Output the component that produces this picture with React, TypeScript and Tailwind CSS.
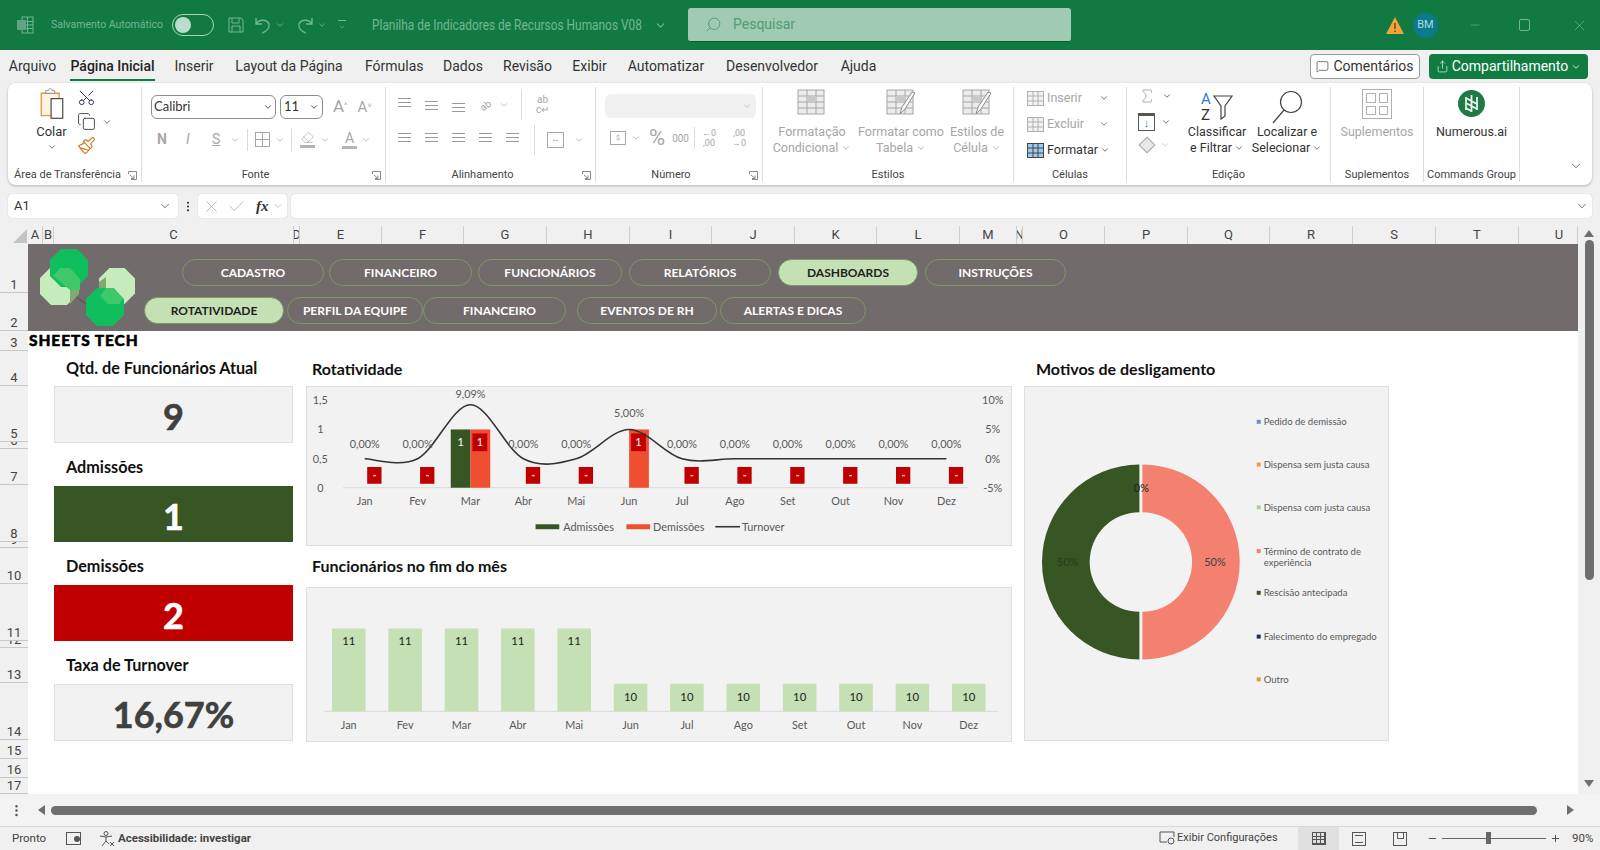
import { ChevronDown, Check, X, Minus, Plus, Search, MessageSquare, Scissors, Copy, Paintbrush, Sigma, MoreVertical, Share, Eraser } from 'lucide-react';
import type { ReactNode } from 'react';

const MONTHS = ['Jan', 'Fev', 'Mar', 'Abr', 'Mai', 'Jun', 'Jul', 'Ago', 'Set', 'Out', 'Nov', 'Dez'];

const TABS = [
  ['Arquivo', 'w-[49px] ml-[8px]'],
  ['Página Inicial', 'w-[85px] ml-[13px]'],
  ['Inserir', 'w-[40px] ml-[19px]'],
  ['Layout da Página', 'w-[110px] ml-[20px]'],
  ['Fórmulas', 'w-[57px] ml-[21px]'],
  ['Dados', 'w-[40px] ml-[21px]'],
  ['Revisão', 'w-[48px] ml-[20px]'],
  ['Exibir', 'w-[35px] ml-[21px]'],
  ['Automatizar', 'w-[78px] ml-[20px]'],
  ['Desenvolvedor', 'w-[94px] ml-[20px]'],
  ['Ajuda', 'w-[37px] ml-[21px]'],
];

const COLS = [
  ['A', 'w-[15px]'], ['B', 'w-[11px]'], ['C', 'w-[240px]'], ['D', 'w-[6px]'], ['E', 'w-[82px]'], ['F', 'w-[82px]'],
  ['G', 'w-[83px]'], ['H', 'w-[83px]'], ['I', 'w-[82px]'], ['J', 'w-[83px]'], ['K', 'w-[82px]'], ['L', 'w-[83px]'],
  ['M', 'w-[57px]'], ['N', 'w-[6px]'], ['O', 'w-[82px]'], ['P', 'w-[83px]'], ['Q', 'w-[82px]'], ['R', 'w-[83px]'],
  ['S', 'w-[83px]'], ['T', 'w-[83px]'], ['U', 'w-[59px] pl-[22px]'],
];

const ROWS = [
  ['1', 'h-[49px]'], ['2', 'h-[38px]'], ['3', 'h-[20px]'], ['4', 'h-[35px]'], ['5', 'h-[56px]'], ['6', 'h-[7px]'],
  ['7', 'h-[36px]'], ['8', 'h-[57px]'], ['9', 'h-[6px]'], ['10', 'h-[36px]'], ['11', 'h-[57px]'], ['12', 'h-[7px]'],
  ['13', 'h-[35px]'], ['14', 'h-[57px]'], ['15', 'h-[19px]'], ['16', 'h-[19px]'], ['17', 'h-[16px]'],
];

const MENU_TOP = [
  ['CADASTRO', 'w-[142px] ml-[154px]', false],
  ['FINANCEIRO', 'w-[143px] ml-[5px]', false],
  ['FUNCIONÁRIOS', 'w-[144px] ml-[6px]', false],
  ['RELATÓRIOS', 'w-[142px] ml-[7px]', false],
  ['DASHBOARDS', 'w-[140px] ml-[7px]', true],
  ['INSTRUÇÕES', 'w-[141px] ml-[7px]', false],
] as const;

const MENU_BOTTOM = [
  ['ROTATIVIDADE', 'w-[140px] ml-[116px]', true],
  ['PERFIL DA EQUIPE', 'w-[136px] ml-[3px]', false],
  ['FINANCEIRO', 'w-[143px] pl-[10px]', false],
  ['EVENTOS DE RH', 'w-[140px] ml-[11px]', false],
  ['ALERTAS E DICAS', 'w-[146px] ml-[3px]', false],
] as const;

const LEGEND = [
  ['Pedido de demissão', 421, '#6a8cbb'],
  ['Dispensa sem justa causa', 464, '#ed9d3a'],
  ['Dispensa com justa causa', 507, '#a9d18e'],
  ['Término de contrato de', 551, '#f4806f'],
  ['Rescisão antecipada', 593, '#375623'],
  ['Falecimento do empregado', 637, '#1f2b5c'],
  ['Outro', 680, '#e0a030'],
] as const;

/** Excel's "smooth line": cubic segments with tangents from the neighbouring points. */
function smoothPath(pts: [number, number][]): string {
  let d = `M${pts[0][0]} ${pts[0][1]}`;
  for (let i = 0; i < pts.length - 1; i++) {
    const p0 = pts[Math.max(i - 1, 0)];
    const p1 = pts[i];
    const p2 = pts[i + 1];
    const p3 = pts[Math.min(i + 2, pts.length - 1)];
    d += ` C${p1[0] + (p2[0] - p0[0]) / 6} ${p1[1] + (p2[1] - p0[1]) / 6} ${p2[0] - (p3[0] - p1[0]) / 6} ${p2[1] - (p3[1] - p1[1]) / 6} ${p2[0]} ${p2[1]}`;
  }
  return d;
}

function Chev({ className = 'text-[#555]' }: { className?: string }) {
  return <ChevronDown size={10} strokeWidth={2} className={className} />;
}

function Octagon({ cx, cy, r, fill }: { cx: number; cy: number; r: number; fill: string }) {
  const k = r * 0.42;
  return (
    <polygon
      points={`${cx - k},${cy - r} ${cx + k},${cy - r} ${cx + r},${cy - k} ${cx + r},${cy + k} ${cx + k},${cy + r} ${cx - k},${cy + r} ${cx - r},${cy + k} ${cx - r},${cy - k}`}
      fill={fill}
    />
  );
}

function Logo() {
  return (
    <svg width="110" height="86" viewBox="28 246 110 86" className="absolute top-[2px] left-0">
      <path d="M74 295 L90 307 L100 307" stroke="#5c5757" strokeWidth="1.5" fill="none" />
      <Octagon cx={59} cy={286} r={19} fill="#c6ecbb" />
      <Octagon cx={117} cy={286} r={18} fill="#c6ecbb" />
      <polygon points="70,275 79,284 79,294 70,304" fill="#84a873" />
      <polygon points="99,282 106,277 106,296 99,296" fill="#84a873" />
      <Octagon cx={69} cy={268} r={19} fill="#0fbe5c" />
      <Octagon cx={105} cy={307} r={19} fill="#0fbe5c" />
      <polygon points="53,276 60,268 70,268 80,279 80,290 70,290" fill="#3fc86a" />
      <polygon points="100,296 106,288 114,288 123,299 119,304 108,304" fill="#3fc86a" />
    </svg>
  );
}

function Pill({ label, width, active }: { label: string; width: string; active: boolean }) {
  return (
    <div
      className={`flex h-full items-center justify-center rounded-full border-[1.5px] border-[#7c9a62] text-[12px] font-bold font-['Lato',sans-serif] ${width} ${active ? 'bg-[#c5e0b4] text-[#1f1f1f]' : 'text-white'}`}
    >
      {label}
    </div>
  );
}

function Kpi({ title, value, tone, first, tall }: { title: string; value: string; tone: string; first?: boolean; tall?: boolean }) {
  return (
    <>
      <div className={`flex items-center pl-[12px] text-[16.2px] font-bold text-[#111] ${first ? 'h-[35px]' : 'h-[43px] pt-[5px]'}`}>{title}</div>
      <div className={`flex items-center justify-center pt-[3px] text-[36px] font-bold [-webkit-text-stroke:0.6px_currentColor] ${tall ? 'h-[57px]' : 'h-[56px]'} ${tone}`}>{value}</div>
    </>
  );
}

function RotationChart() {
  const cats = MONTHS.map((_, i) => 361 + i * 53.55);
  const line = smoothPath(cats.map((x, i) => [x, i === 2 ? 404 : i === 5 ? 429 : 458.7]));
  return (
    <svg viewBox="306 386 706 160" className="h-full w-full font-['Lato',sans-serif]">
      <line x1="339" y1="488" x2="972" y2="488" stroke="#d9d9d9" />
      {[['1,5', 399], ['1', 429], ['0,5', 459], ['0', 488]].map(([t, y]) => (
        <text key={t} x="316" y={Number(y) + 4} textAnchor="middle" fontSize="11" fill="#595959">{t}</text>
      ))}
      {[['10%', 399], ['5%', 429], ['0%', 459], ['-5%', 488]].map(([t, y]) => (
        <text key={t} x="997" y={Number(y) + 4} textAnchor="middle" fontSize="11" fill="#595959">{t}</text>
      ))}
      <rect x={cats[2] - 20} y="429" width="20" height="59" fill="#375623" />
      <rect x={cats[2]} y="429" width="20" height="59" fill="#f04e30" />
      <rect x={cats[5]} y="429" width="20" height="59" fill="#f04e30" />
      <text x={cats[2] - 10} y="446" textAnchor="middle" fontSize="11" fill="#fff">1</text>
      {cats.map((x, i) =>
        i === 2 || i === 5 ? (
          <g key={i}>
            <rect x={x + 2} y="433" width="15" height="18" fill="#c00000" />
            <text x={x + 9.5} y="446" textAnchor="middle" fontSize="11" fill="#fff">1</text>
          </g>
        ) : (
          <g key={i}>
            <rect x={x + 2.5} y="467" width="14.5" height="17" fill="#c00000" />
            <rect x={x + 8.5} y="475" width="3" height="1.5" fill="#f4b6a8" />
          </g>
        ),
      )}
      <path d={line} fill="none" stroke="#333" strokeWidth="1.6" />
      {cats.map((x, i) => (
        <text key={i} x={x} y={i === 2 ? 397 : i === 5 ? 416 : 448} textAnchor="middle" fontSize="11" fill="#595959">
          {i === 2 ? '9,09%' : i === 5 ? '5,00%' : '0,00%'}
        </text>
      ))}
      {cats.map((x, i) => (
        <text key={i} x={x} y="506" textAnchor="middle" fontSize="11" fill="#595959">{MONTHS[i]}</text>
      ))}
      <rect x="534" y="525" width="24" height="5" fill="#375623" />
      <text x="562" y="532" fontSize="11" fill="#595959">Admissões</text>
      <rect x="626" y="525" width="24" height="5" fill="#f04e30" />
      <text x="653" y="532" fontSize="11" fill="#595959">Demissões</text>
      <line x1="716" y1="527.5" x2="741" y2="527.5" stroke="#333" strokeWidth="1.6" />
      <text x="743" y="532" fontSize="11" fill="#595959">Turnover</text>
    </svg>
  );
}

function StaffChart() {
  return (
    <svg viewBox="306 587 706 155" className="h-full w-full font-['Lato',sans-serif]">
      <line x1="320" y1="712" x2="1003" y2="712" stroke="#d9d9d9" />
      {MONTHS.map((m, i) => {
        const x = 344.7 + i * 57.1;
        const big = i < 5;
        return (
          <g key={m}>
            <rect x={x - 17} y={big ? 628 : 684} width="34" height={big ? 84 : 28} fill="#c5e0b4" />
            <text x={x} y={big ? 645 : 701} textAnchor="middle" fontSize="11.5" fill="#222">{big ? '11' : '10'}</text>
            <text x={x} y="730" textAnchor="middle" fontSize="11" fill="#595959">{m}</text>
          </g>
        );
      })}
    </svg>
  );
}

function DonutChart() {
  return (
    <svg viewBox="1024 386 365 355" className="h-full w-full font-['Lato',sans-serif]">
      <path d="M1139 464 A98 98 0 0 0 1139 660 L1139 612 A50 50 0 0 1 1139 512 Z" fill="#375623" />
      <path d="M1142 464 A98 98 0 0 1 1142 660 L1142 612 A50 50 0 0 0 1142 512 Z" fill="#f4806f" />
      <text x="1067" y="566" textAnchor="middle" fontSize="11" fill="#2a3a1c">50%</text>
      <text x="1215" y="566" textAnchor="middle" fontSize="11" fill="#404040">50%</text>
      <text x="1141" y="492" textAnchor="middle" fontSize="11" fill="#222">0%</text>
      {LEGEND.map(([label, y, color]) => (
        <g key={label}>
          <rect x="1257" y={y - 2} width="4" height="4" fill={color} />
          <text x="1264" y={y + 3.5} fontSize="9.6" fill="#595959">{label}</text>
        </g>
      ))}
      <text x="1264" y="566.5" fontSize="9.6" fill="#595959">experiência</text>
    </svg>
  );
}

function RibbonGroup({ label, width, children, launcher, labelClass = '', last }: { label: string; width: string; children: ReactNode; launcher?: boolean; labelClass?: string; last?: boolean }) {
  return (
    <div className={`flex h-[95px] flex-col ${width} ${last ? '' : 'border-r border-[#dcdcdc]'}`}>
      <div className="h-[81px] min-h-0">{children}</div>
      <div className={`relative flex h-[14px] items-center justify-center text-[11px] whitespace-nowrap text-[#444] ${labelClass}`}>
        {label}
        {launcher && (
          <svg width="9" height="9" viewBox="0 0 9 9" className="absolute right-[4px] top-[3px]" fill="none" stroke="#8a8a8a">
            <path d="M.5 3V.5H8.500V8.500H3M2 4L6 7.500M6 4.500V7.500H3" />
          </svg>
        )}
      </div>
    </div>
  );
}

function StyleButton({ top, bottom, width, children }: { top: string; bottom: string; width: string; children: ReactNode }) {
  return (
    <div className={`flex flex-col items-center text-[12.5px] leading-[16px] text-[#a6a6a6] ${width}`}>
      <div className="flex h-[37px] items-start">{children}</div>
      <span className="whitespace-nowrap">{top}</span>
      <span className="flex items-center gap-[3px] whitespace-nowrap">{bottom}<Chev className="text-[#a6a6a6]" /></span>
    </div>
  );
}

function TableGlyph({ brush }: { brush?: boolean }) {
  return (
    <svg width="32" height="30" viewBox="0 0 32 30" fill="none">
      <rect x="2" y="3" width="26" height="24" fill="#ececec" stroke="#a6a6a6" />
      <path d="M2 9H28M2 15H28M2 21H28M11 3V27M20 3V27" stroke="#a6a6a6" />
      <rect x="11" y="9" width="9" height="6" fill="#c9c9c9" />
      {brush && <path d="M30 6L20 22L15 27L17 20L27 5Z" fill="#f7f7f7" stroke="#8e8e8e" />}
    </svg>
  );
}

function CellGlyph({ stroke, fill }: { stroke: string; fill: string }) {
  return (
    <svg width="17" height="15" viewBox="0 0 17 15" fill={fill} stroke={stroke} className="mr-[3px]">
      <rect x=".5" y=".5" width="16" height="14" />
      <path d="M.5 5H16.500M.5 10H16.500M6 .5V14.500M11 .5V14.500" fill="none" />
    </svg>
  );
}

function AlignLines({ pos }: { pos: string }) {
  return (
    <span className={`flex h-[14px] w-[27px] flex-col items-center gap-[3px] ${pos}`}>
      <span className="h-px w-[13px] bg-[#999]" />
      <span className="h-px w-[13px] bg-[#999]" />
      <span className="h-px w-[13px] bg-[#999]" />
    </span>
  );
}

function Ribbon() {
  return (
    <div className="mx-[8px] flex h-[102px] items-center rounded-lg bg-white pt-[1px] shadow-[0_1px_3px_rgba(0,0,0,0.25)]">
      <RibbonGroup label="Área de Transferência" width="w-[134px]" launcher labelClass="pr-[14px]">
        <div className="flex h-full">
          <div className="flex w-[69px] flex-col items-center pl-[18px] text-[13px] text-[#333]">
            <svg width="30" height="34" viewBox="0 0 30 38" fill="none">
              <path d="M3 7H23V32H3Z" fill="#fdf3e3" stroke="#e39a3b" strokeWidth="1.5" />
              <path d="M8 7V4H11C11 1 15 1 15 4H18V7Z" fill="#fff" stroke="#8a8a8a" />
              <rect x="14" y="13" width="13" height="22" fill="#fff" stroke="#444" strokeWidth="1.3" />
            </svg>
            <span className="mt-[1px]">Colar</span>
            <Chev />
          </div>
          <div className="flex flex-col gap-[5px] pt-[1px]">
            <Scissors size={19} strokeWidth={1.2} className="rotate-[-90deg] text-[#335]" />
            <span className="flex items-center gap-[6px]"><Copy size={19} strokeWidth={1.2} className="text-[#444]" /><Chev /></span>
            <Paintbrush size={19} strokeWidth={1.4} className="text-[#c77a25]" />
          </div>
        </div>
      </RibbonGroup>

      <RibbonGroup label="Fonte" width="w-[244px]" launcher labelClass="pr-[16px]">
        <div className="flex h-full flex-col gap-[8px] pt-[7px] pl-[9px]">
          <div className="flex items-center gap-[4px]">
            <div className="flex h-[24px] w-[125px] items-center justify-between rounded-md border border-[#8d8d8d] px-[2px] font-['Lato',sans-serif] text-[13px] text-[#333]">Calibri<Chev className="text-[#333]" /></div>
            <div className="flex h-[24px] w-[43px] items-center justify-between rounded-md border border-[#8d8d8d] px-[3px] font-['Lato',sans-serif] text-[13px] text-[#333]">11<Chev className="text-[#333]" /></div>
            <span className="ml-[6px] text-[17px] text-[#a6a6a6]">A<sup className="text-[8px]">^</sup></span>
            <span className="ml-[6px] text-[15px] text-[#a6a6a6]">A<sup className="text-[8px]">˅</sup></span>
          </div>
          <div className="flex h-[24px] items-center text-[14px] text-[#a6a6a6]">
            <span className="ml-[6px] w-[29px] font-bold">N</span>
            <span className="w-[26px] italic">I</span>
            <span className="w-[18px] underline">S</span>
            <Chev className="text-[#b0b0b0]" />
            <span className="mx-[7px] h-[22px] w-px bg-[#dcdcdc]" />
            <span className="grid h-[15px] w-[15px] grid-cols-2 border border-[#a6a6a6]"><span className="border-r border-b border-[#a6a6a6]" /><span className="border-b border-[#a6a6a6]" /><span className="border-r border-[#a6a6a6]" /><span /></span>
            <Chev className="ml-[5px] text-[#b0b0b0]" />
            <span className="mx-[6px] h-[22px] w-px bg-[#dcdcdc]" />
            <span className="flex w-[18px] flex-col items-center leading-none"><Eraser size={13} strokeWidth={1.3} /><span className="mt-[1px] h-[3px] w-[15px] bg-[#b5b5b5]" /></span>
            <Chev className="ml-[4px] text-[#b0b0b0]" />
            <span className="ml-[12px] flex w-[15px] flex-col items-center leading-none">A<span className="mt-[1px] h-[3px] w-[15px] bg-[#b5b5b5]" /></span>
            <Chev className="ml-[4px] text-[#b0b0b0]" />
          </div>
        </div>
      </RibbonGroup>

      <RibbonGroup label="Alinhamento" width="w-[210px]" launcher labelClass="pr-[16px]">
        <div className="flex h-full flex-col gap-[19px] pt-[10px] pl-[5px]">
          <div className="flex h-[16px] items-center">
            <AlignLines pos="justify-start" />
            <AlignLines pos="justify-center" />
            <AlignLines pos="justify-end" />
            <span className="flex w-[27px] justify-center text-[10px] text-[#a6a6a6] rotate-[-35deg]">ab</span>
            <Chev className="text-[#b0b0b0]" />
            <span className="ml-[12px] h-[30px] w-px bg-[#dcdcdc]" />
            <span className="ml-[14px] text-center text-[10px] leading-[10px] text-[#a6a6a6]">ab<br />c↵</span>
          </div>
          <div className="flex h-[16px] items-center">
            <AlignLines pos="" />
            <AlignLines pos="" />
            <AlignLines pos="" />
            <AlignLines pos="" />
            <AlignLines pos="" />
            <span className="ml-[8px] h-[30px] w-px bg-[#dcdcdc]" />
            <span className="ml-[12px] flex h-[16px] w-[17px] items-center justify-center border border-[#a6a6a6] text-[9px] text-[#a6a6a6]">↔</span>
            <Chev className="ml-[10px] text-[#b0b0b0]" />
          </div>
        </div>
      </RibbonGroup>

      <RibbonGroup label="Número" width="w-[167px]" launcher labelClass="pr-[16px]">
        <div className="flex h-full flex-col gap-[8px] pt-[7px] pl-[9px]">
          <div className="flex h-[24px] w-[151px] items-center justify-end rounded-md bg-[#f0f0f0] pr-[4px]"><Chev className="text-[#c0c0c0]" /></div>
          <div className="flex h-[24px] items-center text-[#a6a6a6]">
            <span className="ml-[5px] flex h-[14px] w-[16px] items-center justify-center border border-[#a6a6a6] text-[7px]">$</span>
            <Chev className="ml-[5px]" />
            <span className="ml-[8px] text-[22px] leading-none">%</span>
            <span className="ml-[7px] text-[10px]">000</span>
            <span className="ml-[5px] h-[22px] w-px bg-[#dcdcdc]" />
            <span className="ml-[7px] text-center text-[9px] leading-[10px]">←0<br />,00</span>
            <span className="ml-[16px] text-center text-[9px] leading-[10px]">,00<br />→0</span>
          </div>
        </div>
      </RibbonGroup>

      <RibbonGroup label="Estilos" width="w-[251px]">
        <div className="flex h-full">
          <StyleButton top="Formatação" bottom="Condicional" width="ml-[8px] w-[82px]"><TableGlyph /></StyleButton>
          <StyleButton top="Formatar como" bottom="Tabela" width="ml-[7px] w-[82px]"><TableGlyph brush /></StyleButton>
          <StyleButton top="Estilos de" bottom="Célula" width="w-[70px]"><TableGlyph brush /></StyleButton>
        </div>
      </RibbonGroup>

      <RibbonGroup label="Células" width="w-[113px]">
        <div className="mt-[-2px] flex h-full flex-col pl-[13px] text-[12.5px] leading-[26px]">
          <span className="flex items-center text-[#a6a6a6]"><CellGlyph stroke="#b0b0b0" fill="#f2f2f2" /><span className="w-[52px]">Inserir</span><Chev /></span>
          <span className="flex items-center text-[#a6a6a6]"><CellGlyph stroke="#b0b0b0" fill="#f2f2f2" /><span className="w-[52px]">Excluir</span><Chev /></span>
          <span className="flex items-center text-[#333]"><CellGlyph stroke="#444" fill="#9ccbee" />Formatar<Chev className="ml-[2px] text-[#555]" /></span>
        </div>
      </RibbonGroup>

      <RibbonGroup label="Edição" width="w-[204px]">
        <div className="flex h-full">
          <div className="flex w-[53px] flex-col gap-[8px] pl-[11px] text-[#a6a6a6]">
            <span className="flex items-center gap-[6px]"><Sigma size={18} strokeWidth={1.2} /><Chev /></span>
            <span className="flex items-center gap-[6px]"><span className="flex h-[18px] w-[17px] items-center justify-center border border-[#555] border-t-[3px] text-[11px] leading-none text-[#2b7cd3]">↓</span><Chev /></span>
            <span className="flex items-center gap-[7px]"><span className="ml-[3px] h-[12px] w-[12px] rotate-45 border border-[#a6a6a6] bg-[#e8e8e8]" /><Chev className="text-[#c0c0c0]" /></span>
          </div>
          <div className="flex w-[74px] flex-col items-center text-[12.5px] leading-[16px] text-[#333]">
            <svg width="36" height="36" viewBox="0 0 36 36" fill="none" className="mt-[2px]">
              <text x="2" y="15" fontSize="15" fill="#2b7cd3">A</text>
              <text x="2" y="31" fontSize="15" fill="#333">Z</text>
              <path d="M15 7H33L26 17V27L22 30V17Z" stroke="#444" strokeWidth="1.2" />
            </svg>
            <span className="mt-[-1px] whitespace-nowrap">Classificar</span>
            <span className="flex items-center gap-[2px] whitespace-nowrap">e Filtrar<Chev /></span>
          </div>
          <div className="flex w-[66px] flex-col items-center text-[12.5px] leading-[16px] text-[#333]">
            <svg width="36" height="36" viewBox="0 0 36 36" fill="none" className="mt-[2px]">
              <circle cx="22" cy="13" r="10.500" stroke="#444" strokeWidth="1.2" />
              <path d="M15 21L4 34" stroke="#444" strokeWidth="1.2" />
            </svg>
            <span className="mt-[-1px] whitespace-nowrap">Localizar e</span>
            <span className="flex items-center gap-[2px] whitespace-nowrap">Selecionar<Chev /></span>
          </div>
        </div>
      </RibbonGroup>

      <RibbonGroup label="Suplementos" width="w-[93px]">
        <div className="flex flex-col items-center pt-[2px] text-[12.5px] text-[#a6a6a6]">
          <span className="grid h-[30px] w-[30px] grid-cols-2 gap-[3px] border border-[#b0b0b0] p-[3px]"><span className="border border-[#b0b0b0]" /><span className="border border-[#b0b0b0]" /><span className="border border-[#b0b0b0]" /><span className="border border-[#b0b0b0]" /></span>
          <span className="mt-[4px]">Suplementos</span>
        </div>
      </RibbonGroup>

      <RibbonGroup label="Commands Group" width="w-[96px]">
        <div className="flex flex-col items-center pt-[3px] text-[12.5px] text-[#333]">
          <svg width="27" height="27" viewBox="0 0 27 27">
            <circle cx="13.500" cy="13.500" r="13.500" fill="#1f7a45" />
            <path d="M8 7V20M13.500 5V22M19 7V20M8 8L19 14M8 13L19 19M8 18L13 21" stroke="#e8f2ec" strokeWidth="1.800" />
          </svg>
          <span className="mt-[6px]">Numerous.ai</span>
        </div>
      </RibbonGroup>

      <div className="flex h-[95px] flex-1 items-end justify-end pr-[9px] pb-[9px]"><ChevronDown size={14} strokeWidth={1.4} className="text-[#444]" /></div>
    </div>
  );
}

function TitleBar() {
  return (
    <div className="flex h-[50px] items-center bg-[#117a43] text-[#74b694]">
      <svg width="18" height="18" viewBox="0 0 18 18" fill="none" stroke="currentColor" className="ml-[16px]">
        <rect x="6" y="1" width="11" height="16" />
        <path d="M6 5.500H17M6 9H17M6 12.500H17M11.500 1V17" />
        <rect x="1" y="4" width="9" height="10" fill="#5fa583" stroke="none" />
      </svg>
      <span className="ml-[17px] w-[114px] text-[10.5px] whitespace-nowrap">Salvamento Automático</span>
      <span className="ml-[7px] flex h-[22px] w-[42px] items-center rounded-full border border-[#a8d4bc] px-[2px]"><span className="h-[16px] w-[16px] rounded-full bg-[#b9ddc9]" /></span>
      <svg width="18" height="18" viewBox="0 0 18 18" fill="none" stroke="currentColor" className="ml-[13px]">
        <path d="M2 2H14L16 4V16H2Z M5 2V7H12V2 M5 16V10H13V16" />
      </svg>
      <svg width="18" height="18" viewBox="0 0 18 18" fill="none" stroke="currentColor" strokeWidth="1.3" className="ml-[9px]">
        <path d="M2 2V8H8M2 8C5 3 13 3 15 8C16 12 12 16 8 17" />
      </svg>
      <Chev className="ml-[3px] text-[#74b694]" />
      <svg width="18" height="18" viewBox="0 0 18 18" fill="none" stroke="currentColor" strokeWidth="1.3" className="ml-[11px]">
        <path d="M16 2V8H10M16 8C13 3 5 3 3 8C2 12 6 16 10 17" />
      </svg>
      <Chev className="ml-[3px] text-[#74b694]" />
      <span className="ml-[11px] flex flex-col items-center gap-[2px]"><span className="h-px w-[8px] bg-current" /><ChevronDown size={8} /></span>
      <span className="ml-[26px] w-[280px] origin-left scale-x-[0.85] text-[14px] whitespace-nowrap">Planilha de Indicadores de Recursos Humanos V08</span>
      <ChevronDown size={13} className="ml-[2px]" />
      <div className="ml-[21px] flex h-[34px] w-[383px] items-center rounded-[3px] border-b border-[#0c5c32] bg-[#a0cab1] pl-[17px] text-[14px] text-[#4f9d72]">
        <Search size={17} strokeWidth={1.3} className="mr-[11px] -scale-x-100" />Pesquisar
      </div>
      <svg width="18" height="17" viewBox="0 0 18 17" className="ml-[315px]">
        <path d="M9 0L18 17H0Z" fill="#f2a33a" />
        <path d="M9 6V12M9 13.500V15" stroke="#5b3a10" strokeWidth="1.300" />
      </svg>
      <span className="ml-[9px] flex h-[25px] w-[25px] items-center justify-center rounded-full bg-[#0b7a8c] text-[11px] text-[#a8dbe0]">BM</span>
      <Minus size={14} strokeWidth={1} className="ml-[30px]" />
      <span className="relative ml-[37px] h-[12px] w-[11px] rounded-[2px] border border-current" />
      <X size={17} strokeWidth={1} className="ml-[41px]" />
    </div>
  );
}

function Tabs() {
  return (
    <div className="flex h-[33px] items-center text-[14px] text-[#333]">
      {TABS.map(([name, cls]) => (
        <div key={name} className={`relative text-center whitespace-nowrap ${cls} ${name === 'Página Inicial' ? 'font-medium text-[#222]' : ''}`}>
          {name}
          {name === 'Página Inicial' && <span className="absolute right-0 bottom-[-4px] left-0 h-[2px] bg-[#107c41]" />}
        </div>
      ))}
      <div className="ml-auto flex items-center gap-[9px] pr-[12px]">
        <div className="flex h-[25px] w-[110px] items-center justify-center gap-[4px] rounded-[4px] border border-[#9a9a9a] bg-white"><MessageSquare size={13} strokeWidth={1.2} />Comentários</div>
        <div className="flex h-[25px] w-[159px] items-center justify-center gap-[3px] rounded-[4px] bg-[#107c41] text-white"><Share size={13} strokeWidth={1.2} />Compartilhamento<Chev className="text-white" /></div>
      </div>
    </div>
  );
}

function FormulaBar() {
  return (
    <div className="mt-[9px] flex h-[24px] items-center px-[8px] text-[13px] text-[#333]">
      <div className="flex h-full w-[170px] items-center justify-between rounded-[4px] bg-white pr-[6px] pl-[6px] shadow-[0_0_1px_rgba(0,0,0,0.3)]">A1<ChevronDown size={14} strokeWidth={1.2} /></div>
      <MoreVertical size={13} className="ml-[3px] w-[14px]" />
      <div className="ml-[3px] flex h-full w-[89px] items-center rounded-[4px] bg-white pl-[4px] text-[#a6a6a6] shadow-[0_0_1px_rgba(0,0,0,0.3)]">
        <X size={19} strokeWidth={1} />
        <Check size={19} strokeWidth={1} className="ml-[6px]" />
        <span className="ml-[10px] font-['Liberation_Serif',serif] text-[15px] font-bold text-[#333] italic">fx</span>
        <ChevronDown size={12} strokeWidth={1.2} className="ml-[3px]" />
      </div>
      <div className="ml-[4px] flex h-full flex-1 items-center justify-end rounded-[4px] bg-white pr-[3px] shadow-[0_0_1px_rgba(0,0,0,0.3)]"><ChevronDown size={14} strokeWidth={1.2} /></div>
    </div>
  );
}

function ColumnHeader() {
  return (
    <div className="mt-[8px] flex h-[18px] text-[13px] text-[#444]">
      <div className="flex w-[28px] items-end justify-end pr-[1px] pb-[1px]">
        <svg width="14" height="14" viewBox="0 0 14 14"><path d="M14 0V14H0Z" fill="#c4c4c4" /></svg>
      </div>
      {COLS.map(([c, w]) => (
        <div key={c} className={`flex items-center justify-center overflow-hidden border-r border-[#cfcfcf] ${w}`}>{c}</div>
      ))}
    </div>
  );
}

function Sheet() {
  return (
    <div className="flex h-[550px]">
      <div className="w-[28px] text-[13px] text-[#444]">
        {ROWS.map(([r, h]) => (
          <div key={r} className={`flex items-end justify-center overflow-hidden border-b border-[#c8c8c8] leading-[15px] ${h}`}>{r}</div>
        ))}
      </div>
      <div className="w-[1550px] bg-white font-['Lato',sans-serif]">
        <div className="relative h-[87px] bg-[#716b6b] pt-[15px]">
          <Logo />
          <div className="flex h-[27px]">
            {MENU_TOP.map(([l, w, a]) => <Pill key={l} label={l} width={w} active={a} />)}
          </div>
          <div className="mt-[11px] flex h-[27px]">
            {MENU_BOTTOM.map(([l, w, a]) => <Pill key={l} label={l} width={w} active={a} />)}
          </div>
        </div>
        <div className="flex h-[20px] items-center pl-[1px] text-[15.5px] leading-none font-black tracking-[0.9px] text-black [-webkit-text-stroke:0.5px_black]">SHEETS TECH</div>
        <div className="flex pl-[26px]">
          <div className="w-[239px]">
            <Kpi first tall title="Qtd. de Funcionários Atual" value="9" tone="border border-[#dedede] bg-[#f2f2f2] text-[#404040]" />
            <Kpi title="Admissões" value="1" tone="bg-[#375623] text-white" />
            <Kpi title="Demissões" value="2" tone="bg-[#c00000] text-white" />
            <Kpi tall title="Taxa de Turnover" value="16,67%" tone="border border-[#dedede] bg-[#f2f2f2] text-[#404040]" />
          </div>
          <div className="ml-[13px] w-[706px]">
            <div className="flex h-[35px] items-center pl-[6px] text-[16px] font-bold text-[#111]">Rotatividade</div>
            <div className="h-[160px] border border-[#dedede] bg-[#f2f2f2]"><RotationChart /></div>
            <div className="flex h-[41px] items-center pb-[2px] pl-[6px] text-[16px] font-bold text-[#111]">Funcionários no fim do mês</div>
            <div className="h-[155px] border border-[#dedede] bg-[#f2f2f2]"><StaffChart /></div>
          </div>
          <div className="ml-[12px] w-[365px]">
            <div className="flex h-[35px] items-center pl-[12px] text-[16px] font-bold text-[#111]">Motivos de desligamento</div>
            <div className="h-[355px] border border-[#dedede] bg-[#f2f2f2]"><DonutChart /></div>
          </div>
        </div>
      </div>
      <div className="flex w-[22px] flex-col items-center pt-[1px] text-[#6f6f6f]">
        <div className="mt-[-15px] h-0 w-0 border-x-[5px] border-b-[7px] border-x-transparent border-b-[#6f6f6f]" />
        <div className="mt-[3px] h-[340px] w-[9px] rounded-full bg-[#6f6f6f]" />
        <div className="mt-[200px] h-0 w-0 border-x-[5px] border-t-[7px] border-x-transparent border-t-[#6f6f6f]" />
      </div>
    </div>
  );
}

function HorizontalScroll() {
  return (
    <div className="flex h-[33px] items-center border-b border-[#d8d8d8] bg-[#f3f3f3]">
      <MoreVertical size={15} className="ml-[9px] text-[#555]" />
      <div className="ml-[14px] h-0 w-0 border-y-[5px] border-r-[7px] border-y-transparent border-r-[#6f6f6f]" />
      <div className="ml-[6px] h-[9px] w-[1486px] rounded-full bg-[#6f6f6f]" />
      <div className="ml-[30px] h-0 w-0 border-y-[5px] border-l-[7px] border-y-transparent border-l-[#6f6f6f]" />
    </div>
  );
}

function StatusBar() {
  return (
    <div className="flex h-[23px] items-center text-[11.5px] text-[#444]">
      <span className="ml-[12px] w-[32px]">Pronto</span>
      <span className="ml-[22px] flex h-[13px] w-[15px] items-center justify-end border border-[#555]"><span className="h-[6px] w-[6px] rounded-full bg-[#555]" /></span>
      <svg width="16" height="16" viewBox="0 0 16 16" fill="none" stroke="#555" className="ml-[18px]">
        <circle cx="7" cy="2.500" r="2" />
        <path d="M1 5L7 6L13 5M7 6V10L3 15M7 10L10 13M11 11L15 15M15 11L11 15" />
      </svg>
      <span className="ml-[3px] w-[135px] font-bold whitespace-nowrap">Acessibilidade: investigar</span>
      <svg width="16" height="15" viewBox="0 0 16 15" fill="none" stroke="#555" className="ml-[906px]">
        <path d="M8 11H1V1H15V6" />
        <circle cx="12" cy="10" r="3" />
      </svg>
      <span className="ml-[2px] w-[102px] text-[11px] whitespace-nowrap">Exibir Configurações</span>
      <span className="ml-[19px] flex h-full w-[41px] items-center justify-center bg-[#e0e0e0]">
        <span className="grid h-[13px] w-[14px] grid-cols-3 grid-rows-3 border border-[#555]">
          {Array.from({ length: 9 }).map((_, i) => <span key={i} className="border-r border-b border-[#555]" />)}
        </span>
      </span>
      <span className="ml-[13px] flex h-[14px] w-[14px] items-center justify-center border border-[#555]"><span className="h-[8px] w-[8px] border-y border-[#555]" /></span>
      <span className="ml-[27px] h-[14px] w-[14px] border border-[#555]"><span className="mx-auto block h-[6px] w-[7px] border-x border-b border-[#555]" /></span>
      <Minus size={11} className="ml-[20px]" />
      <span className="relative ml-[4px] h-px w-[104px] bg-[#666]">
        <span className="absolute top-[-6px] left-[44px] h-[12px] w-[5px] bg-[#666]" />
      </span>
      <Plus size={11} className="ml-[4px]" />
      <span className="ml-[11px] whitespace-nowrap">90%</span>
    </div>
  );
}

export default function App() {
  return (
    <div className="flex h-[850px] w-[1600px] flex-col overflow-hidden bg-[#f0f0f0] font-['Roboto',sans-serif]">
      <TitleBar />
      <Tabs />
      <Ribbon />
      <FormulaBar />
      <ColumnHeader />
      <Sheet />
      <HorizontalScroll />
      <StatusBar />
    </div>
  );
}
